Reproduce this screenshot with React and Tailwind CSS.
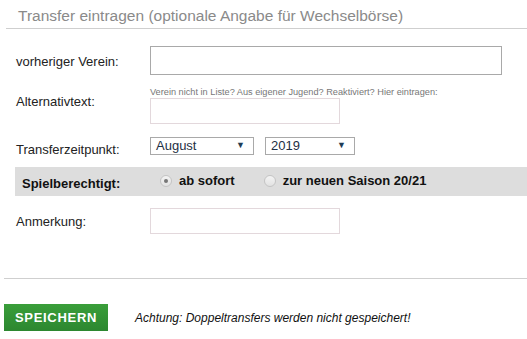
import { useState } from "react";

function Radio({ checked, label, onClick }) {
  return (
    <label className="flex items-center gap-[7px] cursor-pointer" onClick={onClick}>
      <span className="w-[12px] h-[12px] rounded-full border border-[#c4c4c4] bg-gradient-to-b from-[#f4f4f4] to-[#e2e2e2] flex items-center justify-center">
        {checked && <span className="w-[4px] h-[4px] rounded-full bg-[#777]" />}
      </span>
      <span className="font-bold text-[13px] text-[#111]">{label}</span>
    </label>
  );
}

function Select({ value, width }) {
  return (
    <div
      className={`h-[18px] border border-[#a9a9a9] bg-white flex items-center justify-between pl-[5px] pr-[8px] text-[13px] text-[#1e2f44] ${width}`}
    >
      <span>{value}</span>
      <span className="text-[9px] text-[#1f3d55]">▼</span>
    </div>
  );
}

export default function App() {
  const [when, setWhen] = useState("sofort");

  return (
    <div className="w-[527px] h-[339px] bg-white font-['Liberation_Sans',Arial,sans-serif] text-[#222] overflow-hidden">
      <div className="ml-[6px] h-[29px] border-b border-[#cfcfcf] pl-[12px] pt-[7px]">
        <h2 className="text-[15.5px] text-[#8a8a8a] leading-[18px]">
          Transfer eintragen (optionale Angabe für Wechselbörse)
        </h2>
      </div>

      <div className="pl-[16px]">
        <div className="flex items-center mt-[17px] h-[29px]">
          <span className="w-[134px] text-[13px] pt-[2px]">vorheriger Verein:</span>
          <input className="w-[352px] h-[29px] border border-[#a9a9a9] outline-none px-2" />
        </div>

        <div className="flex mt-[12px]">
          <span className="w-[134px] text-[13px] pt-[5px]">Alternativtext:</span>
          <div className="flex flex-col">
            <span className="text-[9.2px] text-[#777] leading-[11px]">
              Verein nicht in Liste? Aus eigener Jugend? Reaktiviert? Hier eintragen:
            </span>
            <input className="w-[190px] h-[26px] border border-[#e3d8dc] outline-none px-2" />
          </div>
        </div>

        <div className="flex items-start mt-[13px]">
          <span className="w-[134px] text-[13px] pt-[5px] leading-[15px]">Transferzeitpunkt:</span>
          <div className="flex gap-[11px]">
            <Select value="August" width="w-[104px]" />
            <Select value="2019" width="w-[90px]" />
          </div>
        </div>
      </div>

      <div className="ml-[15px] mt-[10px] h-[29px] bg-[#dddddd] flex items-center">
        <span className="w-[145px] pl-[7px] pt-[4px] font-bold text-[13px] text-[#111]">Spielberechtigt:</span>
        <div className="flex gap-[29px] pb-[1px]">
          <Radio checked={when === "sofort"} label="ab sofort" onClick={() => setWhen("sofort")} />
          <Radio checked={when === "saison"} label="zur neuen Saison 20/21" onClick={() => setWhen("saison")} />
        </div>
      </div>

      <div className="pl-[16px] flex items-center mt-[12px] h-[26px]">
        <span className="w-[134px] text-[13px] pt-[1px]">Anmerkung:</span>
        <input className="w-[190px] h-[26px] border border-[#e3d8dc] outline-none px-2" />
      </div>

      <div className="ml-[4px] mt-[44px] border-t border-[#cfcfcf]" />

      <div className="flex items-center mt-[25px] pl-[4px]">
        <button className="w-[104px] h-[27px] bg-gradient-to-b from-[#3a9e3a] to-[#2c8730] text-white font-bold text-[13px] tracking-[0.7px]">
          SPEICHERN
        </button>
        <span className="ml-[27px] italic text-[12px] text-[#111]">
          Achtung: Doppeltransfers werden nicht gespeichert!
        </span>
      </div>
    </div>
  );
}
